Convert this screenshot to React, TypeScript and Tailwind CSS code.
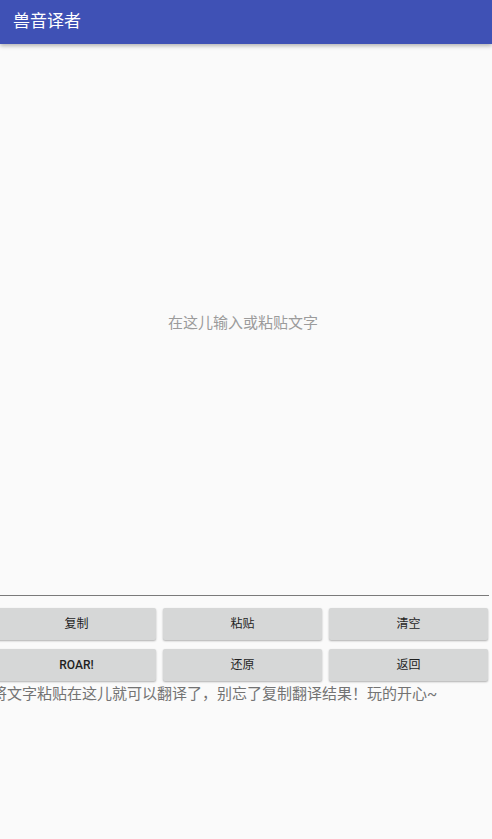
import React from "react";

const cjk = { fontFamily: 'Roboto, "Noto Sans CJK SC", sans-serif' };

function PlainButton({ label, latin = false }: { label: string; latin?: boolean }) {
  return (
    <button
      className={
        latin
          ? "h-[32px] w-[159px] rounded-[2px] bg-[#d6d7d7] text-[12px] font-medium text-[#1f1f1f] shadow-[0_1px_2px_rgba(0,0,0,0.3)]"
          : "h-[32px] w-[159px] rounded-[2px] bg-[#d6d7d7] text-[12px] font-normal text-[#1f1f1f] shadow-[0_1px_2px_rgba(0,0,0,0.3)]"
      }
      style={cjk}
    >
      {label}
    </button>
  );
}

export default function App() {
  return (
    <div className="relative flex h-[839px] w-[492px] flex-col overflow-hidden bg-[#fafafa]" style={cjk}>
      {/* Toolbar */}
      <div className="relative z-10 flex h-[44px] items-center bg-[#3f51b5] pl-[13px] shadow-[0_2px_4px_rgba(0,0,0,0.28)]">
        <span className="text-[17px] text-white">兽音译者</span>
      </div>

      {/* Input area */}
      <div className="ml-[-3px] flex h-[552px] w-[492px] items-center justify-center border-b border-[#7a7a7a] pt-[8px]">
        <span className="text-[15px] text-[#9b9b9b]">在这儿输入或粘贴文字</span>
      </div>

      {/* Buttons */}
      <div className="ml-[-3px] mt-[12px] flex w-[492px] flex-col gap-[9px]">
        <div className="flex gap-[7px]">
          <PlainButton label="复制" />
          <PlainButton label="粘贴" />
          <PlainButton label="清空" />
        </div>
        <div className="flex gap-[7px]">
          <PlainButton label="ROAR!" latin />
          <PlainButton label="还原" />
          <PlainButton label="返回" />
        </div>
      </div>

      {/* Hint */}
      <p className="ml-[-8px] mt-[3px] whitespace-nowrap text-[15px] leading-[20px] text-[#737373]">
        将文字粘贴在这儿就可以翻译了，别忘了复制翻译结果！玩的开心~
      </p>
    </div>
  );
}
